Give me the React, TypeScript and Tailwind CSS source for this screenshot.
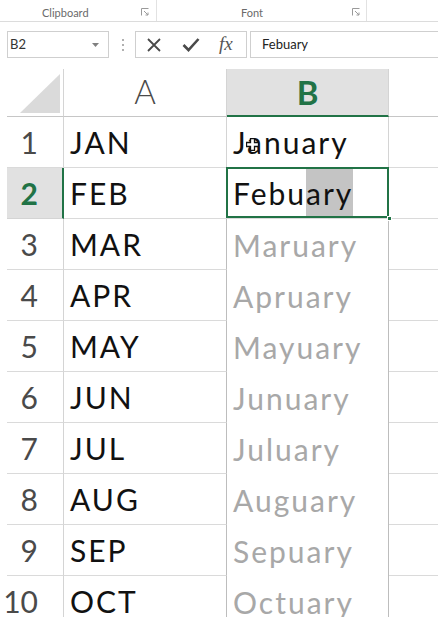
import React from "react";

const rows: [string, string][] = [
  ["JAN", "January"],
  ["FEB", "Febuary"],
  ["MAR", "Maruary"],
  ["APR", "Apruary"],
  ["MAY", "Mayuary"],
  ["JUN", "Junuary"],
  ["JUL", "Juluary"],
  ["AUG", "Auguary"],
  ["SEP", "Sepuary"],
  ["OCT", "Octuary"],
];

function Launcher() {
  return (
    <svg width="8" height="8" viewBox="0 0 8 8" className="shrink-0">
      <path d="M0.5 7.5V0.5H7.5" fill="none" stroke="#9a9a9a" strokeWidth="1" />
      <path d="M3 3L7 7M7 4.5V7H4.5" fill="none" stroke="#9a9a9a" strokeWidth="1" />
    </svg>
  );
}

function CrossCursor() {
  return (
    <svg width="13" height="13" viewBox="0 0 13 13" className="absolute left-[19px] top-[21px]">
      <path
        d="M4.5 0.5H8.5V4.5H12.5V8.5H8.5V12.5H4.5V8.5H0.5V4.5H4.5Z"
        fill="#ffffff"
        stroke="#111111"
        strokeWidth="1.3"
      />
    </svg>
  );
}

export default function App() {
  return (
    <div className="w-[438px] h-[617px] overflow-hidden bg-white font-[Lato,'Open_Sans',sans-serif] relative">
      {/* Ribbon group labels */}
      <div className="h-[22px] flex border-b border-[#dcdcdc] text-[11px] text-[#6a6a6a]">
        <div className="w-[157px] shrink-0 flex items-end border-r border-[#e2e2e2] pl-[42px] pr-[7px] pb-[2px]">
          <span className="leading-none pb-[1px]">Clipboard</span>
          <span className="ml-auto mb-[3px]"><Launcher /></span>
        </div>
        <div className="w-[210px] shrink-0 flex items-end border-r border-[#e2e2e2] pl-[84px] pr-[6px] pb-[2px]">
          <span className="leading-none pb-[1px]">Font</span>
          <span className="ml-auto mb-[3px]"><Launcher /></span>
        </div>
        <div className="flex-1" />
      </div>

      {/* Formula bar */}
      <div className="mt-[9px] h-[27px] flex items-stretch pl-[7px]">
        <div className="w-[102px] shrink-0 border border-[#cfcfcf] flex items-center pl-[2px] pr-[9px] text-[13px] text-[#333]">
          <span>B2</span>
          <svg width="7" height="4" viewBox="0 0 7 4" className="ml-auto">
            <path d="M0 0H7L3.5 4Z" fill="#808080" />
          </svg>
        </div>
        <div className="w-[26px] shrink-0 flex flex-col items-center justify-center gap-[3px] pl-[2px]">
          <span className="w-[2px] h-[2px] bg-[#b0b0b0]" />
          <span className="w-[2px] h-[2px] bg-[#b0b0b0]" />
          <span className="w-[2px] h-[2px] bg-[#b0b0b0]" />
        </div>
        <div className="w-[112px] shrink-0 border border-[#cfcfcf] flex items-center">
          <svg width="16" height="16" viewBox="0 0 16 16" className="ml-[10px]">
            <path d="M2 2L14 14M14 2L2 14" stroke="#4a4a4a" strokeWidth="1.8" fill="none" />
          </svg>
          <svg width="18" height="15" viewBox="0 0 18 15" className="ml-[20px]">
            <path d="M1.5 8L6.5 13L16.5 2" stroke="#4a4a4a" strokeWidth="2.6" fill="none" />
          </svg>
          <span className="ml-[19px] text-[19px] italic text-[#555] font-['Liberation_Serif',serif] leading-none pb-[2px]">
            fx
          </span>
        </div>
        <div className="ml-[3px] flex-1 border border-[#cfcfcf] border-r-0 flex items-center pl-[11px] text-[13px] text-[#222]">
          Febuary
        </div>
      </div>

      {/* Sheet grid */}
      <div className="mt-[11px] pl-[7px]">
        {/* Column headers */}
        <div className="flex h-[48px]">
          <div className="w-[57px] shrink-0 border-r border-b border-r-[#d4d4d4] border-b-[#c6c6c6] flex items-end justify-end pr-[3px] pb-[3px]">
            <svg width="40" height="39" viewBox="0 0 40 39">
              <path d="M40 0V39H0Z" fill="#dadada" />
            </svg>
          </div>
          <div className="w-[163px] shrink-0 border-r border-b border-r-[#d4d4d4] border-b-[#c6c6c6] flex items-center justify-center text-[33px] text-[#4a4a4a] font-light leading-none pb-[2px]">
            A
          </div>
          <div className="w-[162px] shrink-0 bg-[#e1e1e1] border-r border-b-2 border-r-[#d4d4d4] border-b-[#217346] flex items-center justify-center text-[33px] font-bold text-[#217346] leading-none">
            B
          </div>
          <div className="flex-1 border-b border-b-[#c6c6c6]" />
        </div>

        {rows.map(([a, b], i) => {
          const n = i + 1;
          const selected = n === 2;
          const preview = n >= 3;
          return (
            <div key={n} className="flex h-[51px] text-[30px] leading-none">
              <div
                className={
                  selected
                    ? "w-[57px] shrink-0 bg-[#e1e1e1] border-r-2 border-b border-r-[#217346] border-b-[#d4d4d4] flex items-center justify-end pr-[24px] font-bold text-[#217346]"
                    : "w-[57px] shrink-0 border-r border-b border-r-[#d4d4d4] border-b-[#dadada] flex items-center justify-end pr-[25px] text-[#4a4a4a]"
                }
              >
                {n}
              </div>
              <div
                className={
                  preview
                    ? "w-[163px] shrink-0 border-r border-b border-r-[#bdbdbd] border-b-[#dadada] flex items-center pl-[6px] text-[#111] tracking-[2px]"
                    : "w-[163px] shrink-0 border-r border-b border-r-[#d4d4d4] border-b-[#dadada] flex items-center pl-[6px] text-[#111] tracking-[2px]"
                }
              >
                {a}
              </div>
              {selected ? (
                <div className="w-[162px] shrink-0 border-b border-b-[#dadada] relative flex items-stretch pl-[6px] text-[#111] tracking-[2px]">
                  <span className="flex items-center">Febu</span>
                  <span className="flex items-center bg-[#c4c4c4]">ary</span>
                  <div className="absolute left-[-1px] top-[-1px] right-0 bottom-0 border-2 border-[#217346]" />
                  <div className="absolute right-[-3px] bottom-[-3px] w-[5px] h-[5px] bg-[#217346] border border-white" />
                </div>
              ) : preview ? (
                <div className="w-[162px] shrink-0 border-r border-r-[#bdbdbd] flex items-center pl-[6px] text-[#a8a8a8] tracking-[2px]">
                  {b}
                </div>
              ) : (
                <div className="w-[162px] shrink-0 border-r border-b border-r-[#d4d4d4] border-b-[#dadada] relative flex items-center pl-[6px] text-[#111] tracking-[2px]">
                  {b}
                  <CrossCursor />
                </div>
              )}
              <div className="flex-1 border-b border-b-[#dadada]" />
            </div>
          );
        })}
      </div>
    </div>
  );
}
